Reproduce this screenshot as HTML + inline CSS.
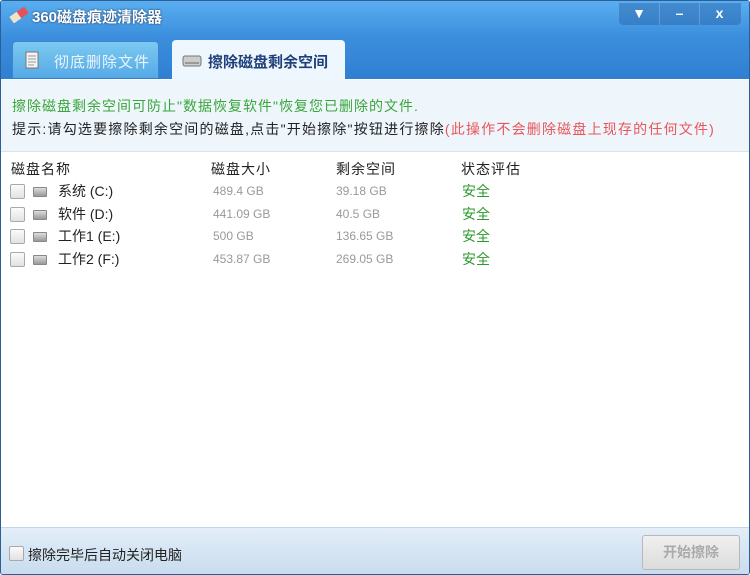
<!DOCTYPE html>
<html><head><meta charset="utf-8"><style>
*{margin:0;padding:0;box-sizing:border-box}
body{width:750px;height:575px;overflow:hidden;font-family:"Liberation Sans","Noto Sans CJK SC",sans-serif;background:#fff;position:relative}
.win{position:absolute;left:0;top:0;width:750px;height:575px;border:1px solid #2c5f98;border-radius:3px;overflow:hidden;background:#fff}
.title{position:absolute;left:0;top:0;width:748px;height:78px;background:linear-gradient(#5aaef0,#3c8fdc 45%,#2f7fd2)}
.ttext{position:absolute;left:31px;top:5px;color:#fff;font-size:15px;font-weight:bold;text-shadow:0 0 2px #235;}
.ctrl{position:absolute;left:618px;top:2px;width:122px;height:22px;background:rgba(30,80,150,.35);border-radius:0 0 4px 4px;color:#fff}
.ctrl span{position:absolute;top:0;height:22px;width:40px;text-align:center;font-size:14px;font-weight:bold;line-height:20px}
.tab1{position:absolute;left:11px;top:40px;width:147px;height:37px;background:linear-gradient(#7cc9f1,#55a9e6);border-radius:4px 4px 0 0;border:1px solid #3b86cf;border-bottom:none;color:#eaf4fc;font-size:15px;letter-spacing:1px}
.tab2{position:absolute;left:171px;top:39px;width:173px;height:40px;background:#eef7fd;border-radius:4px 4px 0 0;color:#1e3f7a;font-size:15px;font-weight:bold}
.info{position:absolute;left:0;top:79px;width:748px;height:72px;background:#eef6fc;border-bottom:1px solid #d7e4f0}
.g{position:absolute;left:11px;top:95px;color:#3aa63a;font-size:14px;letter-spacing:1px}
.t{position:absolute;left:11px;top:118px;color:#222;font-size:14px;letter-spacing:1.2px}
.t b{font-weight:normal;color:#e8565a}
.hdr{position:absolute;top:158px;font-size:14px;color:#222;letter-spacing:1px}
.row{position:absolute;left:0;width:748px;height:22px;font-size:14px}
.cb{position:absolute;left:9px;top:3px;width:15px;height:15px;border:1px solid #a9a9a9;border-radius:2px;background:linear-gradient(#fbfbfb,#e2e2e2)}
.dk{position:absolute;left:32px;top:6px;width:14px;height:10px;border:1px solid #888;background:linear-gradient(#ddd,#999);border-radius:1px}
.nm{position:absolute;left:57px;top:0px;color:#222}
.sz{position:absolute;left:212px;top:3px;color:#999;font-size:12px}
.fr{position:absolute;left:335px;top:3px;color:#999;font-size:12px}
.st{position:absolute;left:461px;top:0px;color:#2c9a2c}
.foot{position:absolute;left:0;top:526px;width:748px;height:48px;background:linear-gradient(#e3eef8,#c8dcee);border-top:1px solid #c3d5e6}
.btn{position:absolute;left:641px;top:7px;width:98px;height:35px;border:1px solid #b8b8b8;border-radius:3px;background:linear-gradient(#f0f0f0,#dcdcdc);color:#aaa;font-size:14px;font-weight:bold;text-align:center;line-height:33px}
</style></head><body><div class="win">
<div class="title">
<svg style="position:absolute;left:7px;top:6px" width="22" height="16"><g transform="rotate(-35 11 8)"><rect x="2" y="4" width="9" height="8" fill="#f2e2c8"/><rect x="11" y="4" width="9" height="8" fill="#e8505a"/></g></svg>
<div class="ttext">360磁盘痕迹清除器</div>
<div class="ctrl"><span style="left:0">▼</span><span style="left:40px;border-left:1px solid rgba(255,255,255,.2)">–</span><span style="left:80px;border-left:1px solid rgba(255,255,255,.2)">x</span></div>
<div class="tab1"><svg style="position:absolute;left:12px;top:9px" width="14" height="18"><rect x="1" y="1" width="12" height="16" fill="#f4f4f4" stroke="#777"/><path d="M3 5h8M3 8h8M3 11h8M3 14h6" stroke="#999"/></svg><span style="position:absolute;left:41px;top:9px">彻底删除文件</span></div>
<div class="tab2"><svg style="position:absolute;left:10px;top:12px" width="20" height="16"><rect x="1" y="4" width="18" height="10" rx="2" fill="#ccc" stroke="#777"/><rect x="3" y="10" width="14" height="2" fill="#999"/></svg><span style="position:absolute;left:36px;top:11px">擦除磁盘剩余空间</span></div>
</div>
<div class="info"></div>
<div class="g">擦除磁盘剩余空间可防止"数据恢复软件"恢复您已删除的文件.</div>
<div class="t">提示:请勾选要擦除剩余空间的磁盘,点击"开始擦除"按钮进行擦除<b>(此操作不会删除磁盘上现存的任何文件)</b></div>
<div class="hdr" style="left:10px">磁盘名称</div>
<div class="hdr" style="left:210px">磁盘大小</div>
<div class="hdr" style="left:335px">剩余空间</div>
<div class="hdr" style="left:460px">状态评估</div>
<div class="row" style="top:180px"><div class="cb"></div><div class="dk"></div><div class="nm">系统 (C:)</div><div class="sz">489.4 GB</div><div class="fr">39.18 GB</div><div class="st">安全</div></div>
<div class="row" style="top:203px"><div class="cb"></div><div class="dk"></div><div class="nm">软件 (D:)</div><div class="sz">441.09 GB</div><div class="fr">40.5 GB</div><div class="st">安全</div></div>
<div class="row" style="top:225px"><div class="cb"></div><div class="dk"></div><div class="nm">工作1 (E:)</div><div class="sz">500 GB</div><div class="fr">136.65 GB</div><div class="st">安全</div></div>
<div class="row" style="top:248px"><div class="cb"></div><div class="dk"></div><div class="nm">工作2 (F:)</div><div class="sz">453.87 GB</div><div class="fr">269.05 GB</div><div class="st">安全</div></div>
<div class="foot"><div class="cb" style="left:8px;top:18px"></div><span style="position:absolute;left:27px;top:17px;font-size:14px;color:#222">擦除完毕后自动关闭电脑</span><div class="btn">开始擦除</div></div>
</div></body></html>
